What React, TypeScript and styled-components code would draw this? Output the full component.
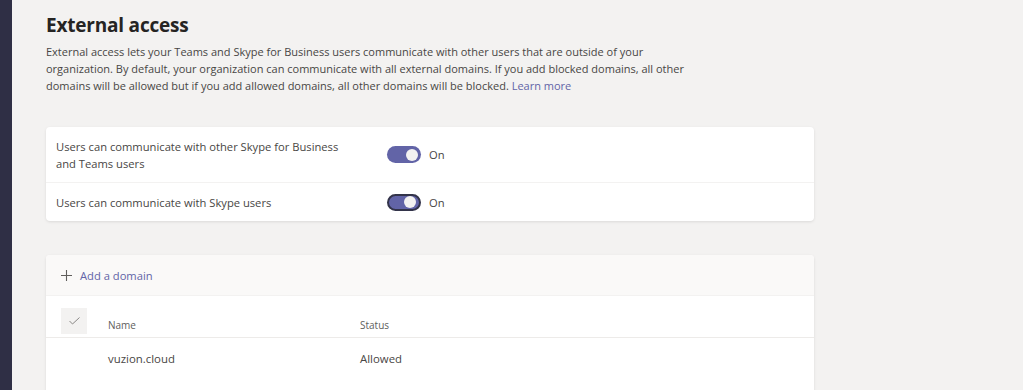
import React from "react";
import styled, { createGlobalStyle } from "styled-components";

const GlobalStyle = createGlobalStyle`
  html, body {
    margin: 0;
    padding: 0;
    background: #f3f2f1;
    font-family: "Open Sans", "Noto Sans", sans-serif;
    color: #252423;
  }
`;

const Shell = styled.div`
  display: flex;
  width: 1023px;
  height: 390px;
  overflow: hidden;
`;

const Sidebar = styled.div`
  width: 12px;
  flex: 0 0 12px;
  background: #2f2f45;
`;

const Main = styled.main`
  flex: 1;
  padding: 11px 0 0 34px;
`;

const Title = styled.h1`
  margin: 0;
  font-size: 19px;
  line-height: 28px;
  font-weight: 700;
  letter-spacing: -0.2px;
  color: #252423;
`;

const Description = styled.p`
  margin: 4px 0 0;
  width: 655px;
  font-size: 11px;
  line-height: 17px;
  color: #484644;
`;

const Link = styled.a`
  color: #6264a7;
  text-decoration: none;
`;

const Card = styled.section<{ $top: number; $bottom?: number }>`
  width: 768px;
  margin-top: ${(p) => p.$top}px;
  padding-bottom: ${(p) => p.$bottom ?? 0}px;
  background: #fff;
  border-radius: 4px;
  box-shadow: 0 1px 3px rgba(0, 0, 0, 0.1);
  overflow: hidden;
`;

const SettingRow = styled.div<{ $height: number }>`
  display: flex;
  align-items: center;
  height: ${(p) => p.$height}px;
  padding: 0 10px;
  border-bottom: 1px solid #f3f2f1;
  &:last-child {
    border-bottom: none;
  }
`;

const SettingLabel = styled.div`
  width: 331px;
  padding-right: 40px;
  box-sizing: border-box;
  font-size: 11.2px;
  line-height: 17px;
  color: #484644;
`;

const ToggleWrap = styled.div`
  display: flex;
  align-items: center;
  gap: 8px;
  font-size: 11.2px;
  color: #484644;
`;

const Track = styled.span<{ $focused?: boolean }>`
  position: relative;
  display: inline-block;
  width: 34px;
  height: 17px;
  box-sizing: border-box;
  border-radius: 9px;
  background: #6264a7;
  border: ${(p) => (p.$focused ? "2px solid #33344a" : "none")};
`;

const Knob = styled.span`
  position: absolute;
  right: 3px;
  top: 50%;
  width: 12px;
  height: 12px;
  margin-top: -6px;
  border-radius: 50%;
  background: #f3f2f1;
`;

const Toolbar = styled.div`
  display: flex;
  align-items: center;
  gap: 8px;
  height: 40px;
  padding: 0 0 0 15px;
  background: #faf9f8;
  color: #6264a7;
  font-size: 11.2px;
  border-bottom: 1px solid #f3f2f1;
`;

const TableRow = styled.div<{ $height: number; $header?: boolean }>`
  display: grid;
  grid-template-columns: 26px 231px 1fr;
  column-gap: 21px;
  align-items: center;
  height: ${(p) => p.$height}px;
  padding-left: 15px;
  font-size: ${(p) => (p.$header ? "10px" : "11.4px")};
  color: ${(p) => (p.$header ? "#605e5c" : "#484644")};
  border-bottom: ${(p) => (p.$header ? "1px solid #edebe9" : "none")};
`;

const CheckCell = styled.div`
  width: 26px;
  height: 26px;
  background: #f3f2f1;
  display: flex;
  align-items: center;
  justify-content: center;
  align-self: center;
  margin-top: 8px;
`;

const HeadText = styled.span`
  padding-top: 16px;
`;

const Toggle = ({ focused }: { focused?: boolean }) => (
  <ToggleWrap>
    <Track $focused={focused}>
      <Knob />
    </Track>
    On
  </ToggleWrap>
);

export default function App() {
  return (
    <>
      <GlobalStyle />
      <Shell>
        <Sidebar />
        <Main>
          <Title>External access</Title>
          <Description>
            External access lets your Teams and Skype for Business users communicate with other users that are outside of your
            organization. By default, your organization can communicate with all external domains. If you add blocked domains, all other
            domains will be allowed but if you add allowed domains, all other domains will be blocked.{" "}
            <Link href="#">Learn more</Link>
          </Description>

          <Card $top={33}>
            <SettingRow $height={55}>
              <SettingLabel>Users can communicate with other Skype for Business and Teams users</SettingLabel>
              <Toggle />
            </SettingRow>
            <SettingRow $height={38}>
              <SettingLabel>Users can communicate with Skype users</SettingLabel>
              <Toggle focused />
            </SettingRow>
          </Card>

          <Card $top={34} $bottom={30}>
            <Toolbar>
              <svg width="11" height="11" viewBox="0 0 11 11" fill="none" stroke="#605e5c" strokeWidth="1.1">
                <path d="M5.5 0v11M0 5.5h11" />
              </svg>
              Add a domain
            </Toolbar>
            <TableRow $height={41} $header>
              <CheckCell>
                <svg width="11" height="8" viewBox="0 0 11 8" fill="none" stroke="#8a8886" strokeWidth="1">
                  <path d="M0.5 4l3 3 7-6.5" />
                </svg>
              </CheckCell>
              <HeadText>Name</HeadText>
              <HeadText>Status</HeadText>
            </TableRow>
            <TableRow $height={40}>
              <span />
              <span>vuzion.cloud</span>
              <span>Allowed</span>
            </TableRow>
          </Card>
        </Main>
      </Shell>
    </>
  );
}
